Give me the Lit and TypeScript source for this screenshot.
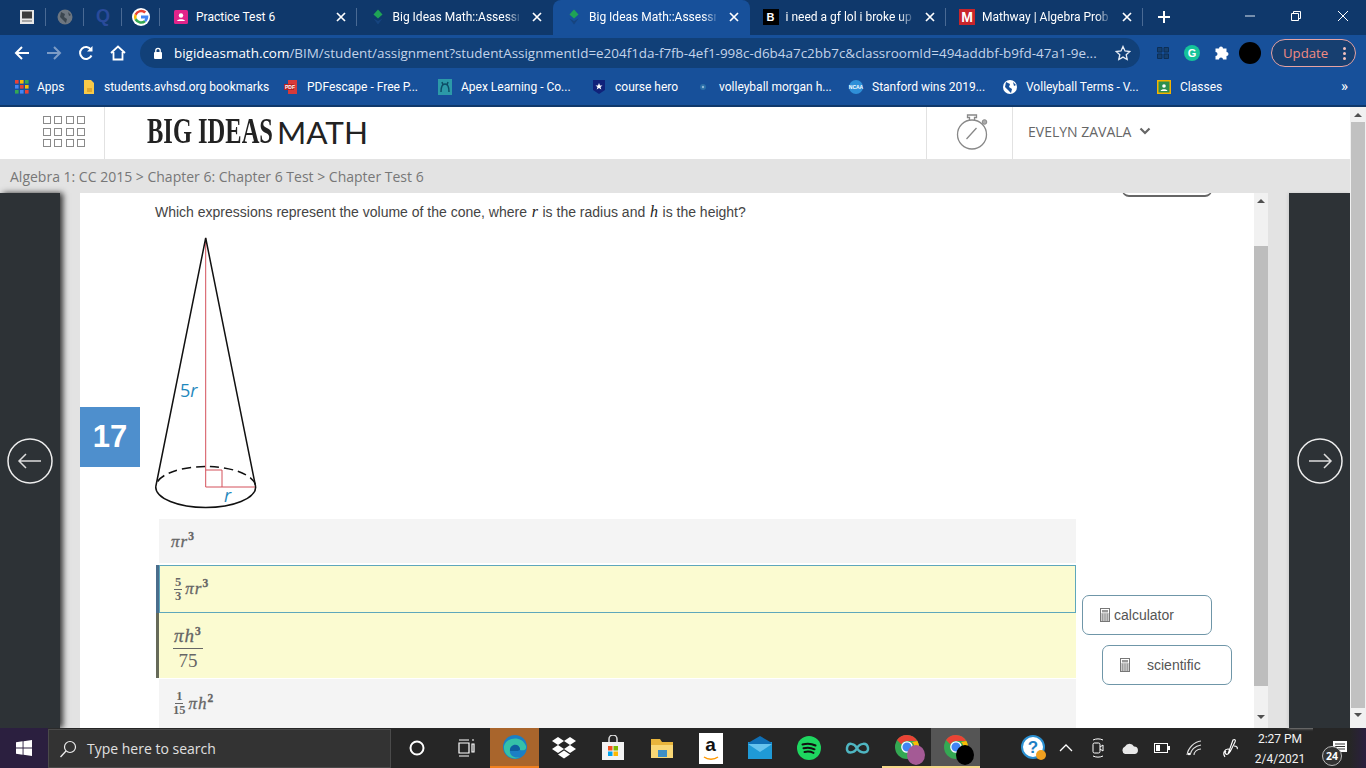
import { LitElement, html, svg, css } from "lit";
import { customElement } from "lit/decorators.js";

const calc = (w: number, h: number) => html`<svg class="calc" width="${w}" height="${h}" viewBox="0 0 10 14"><rect x=".5" y=".5" width="9" height="13" fill="#fff" stroke="#777"/><rect x="2" y="2" width="6" height="2.4" fill="#999"/><path d="M.5 6h9M.5 8h9M.5 10h9M.5 12h9M2.7 5.5v8M5 5.5v8M7.3 5.5v8" stroke="#777" stroke-width=".7" fill="none"/></svg>`;
const bim = html`<svg width="16" height="16" viewBox="0 0 16 16"><path d="M8 0.500l4.500 5L8 9.500 3.500 5.500z" fill="#1fa356"/><path d="M3.500 9.500L8 15.500l4.500-6L8 12z" fill="#16447f"/></svg>`;
const x = html`<svg class="x" width="10" height="10" viewBox="0 0 10 10"><path d="M1 1l8 8M9 1l-8 8" stroke="#fff" stroke-width="1.7"/></svg>`;

const TABS = [
  { t: "Practice Test 6", i: html`<svg width="16" height="16" viewBox="0 0 16 16"><rect x="1" y="1" width="14" height="14" rx="1.5" fill="#e2248a"/><circle cx="8" cy="6.5" r="2.2" fill="#fff"/><path d="M4 12c.5-2.500 7.500-2.500 8 0z" fill="#fff"/></svg>`, a: false, f: false },
  { t: "Big Ideas Math::Assessme", i: bim, a: false, f: true },
  { t: "Big Ideas Math::Assessme", i: bim, a: true, f: true },
  { t: "i need a gf lol i broke up", i: html`<span class="fav-b">B</span>`, a: false, f: true },
  { t: "Mathway | Algebra Probl", i: html`<span class="fav-m">M</span>`, a: false, f: true },
];

const APPS = ["#e94235", "#fbbc04", "#34a853", "#4285f4", "#e94235", "#fbbc04", "#34a853", "#4285f4", "#e94235"];
const BOOKMARKS = [
  { w: 67, t: "Apps", i: html`<svg width="14" height="14" viewBox="0 0 14 14">${APPS.map((c, k) => svg`<rect x="${(k % 3) * 5}" y="${Math.floor(k / 3) * 5}" width="3.6" height="3.6" fill="${c}"></rect>`)}</svg>` },
  { w: 201, t: "students.avhsd.org bookmarks", i: html`<svg width="14" height="16" viewBox="0 0 14 16"><path d="M2 1h7l3 3v11H2z" fill="#f7c948"/><path d="M5 9h5v4H5z" fill="#e0a82e"/></svg>` },
  { w: 154, t: "PDFescape - Free P...", i: html`<svg width="16" height="16" viewBox="0 0 16 16"><path d="M5 1h9v14H5z" fill="#d63a3a"/><rect x="1" y="5" width="10" height="6" fill="#b52222"/><text x="2" y="10" font-size="5" font-weight="700" fill="#fff" font-family="Liberation Sans">PDF</text></svg>` },
  { w: 154, t: "Apex Learning - Co...", i: html`<svg width="16" height="16" viewBox="0 0 16 16"><rect x="1" y="0" width="14" height="16" fill="#2c9aa8"/><path d="M4 13c0-6 2-8 4-8s4 2 4 8M5 3l1 3M11 3l-1 3" stroke="#0d4d66" stroke-width="1.500" fill="none"/></svg>` },
  { w: 104, t: "course hero", i: html`<svg width="16" height="16" viewBox="0 0 16 16"><path d="M2 1h12v10l-6 4-6-4z" fill="#10227a"/><path d="M8 4l1 2.500h2.500L9.500 8l.8 2.500L8 9 5.700 10.500 6.500 8 4.500 6.500H7z" fill="#fff"/></svg>` },
  { w: 153, t: "volleyball morgan h...", i: html`<svg width="16" height="16" viewBox="0 0 16 16"><circle cx="8" cy="8" r="3" fill="#2a6fa8"/><circle cx="8" cy="8" r="1.200" fill="#8fb6d6"/></svg>` },
  { w: 154, t: "Stanford wins 2019...", i: html`<svg width="16" height="16" viewBox="0 0 16 16"><circle cx="8" cy="8" r="7" fill="#2f8fd8"/><text x="8" y="10" text-anchor="middle" font-size="5" font-weight="700" fill="#fff" font-family="Liberation Sans">NCAA</text></svg>` },
  { w: 154, t: "Volleyball Terms - V...", i: html`<svg width="16" height="16" viewBox="0 0 16 16"><circle cx="8" cy="8" r="7" fill="#fff"/><path d="M4 3l4 2-1 3 3 2-1 4-3-3-3-3zM11 3l3 3-2 1z" fill="#17509a"/></svg>` },
  { w: 70, t: "Classes", i: html`<svg width="16" height="16" viewBox="0 0 16 16"><rect x="1" y="1" width="14" height="14" fill="#f4b400"/><rect x="2.500" y="2.500" width="11" height="11" fill="#2f8f4e"/><circle cx="8" cy="7" r="1.800" fill="#fff"/><path d="M4.500 12c.5-2.500 6.500-2.500 7 0z" fill="#fff"/></svg>` },
];

const chrome = html`<svg width="26" height="26" viewBox="0 0 26 26"><circle cx="13" cy="13" r="12" fill="#34a853"/><path d="M13 1a12 12 0 0 1 10.400 6H13a6 6 0 0 0-5.500 3.500L3 6a12 12 0 0 1 10-5z" fill="#ea4335"/><path d="M23.400 7A12 12 0 0 1 14 25l5-8.500A6 6 0 0 0 18 8z" fill="#fbbc04"/><circle cx="13" cy="13" r="5.200" fill="#4285f4" stroke="#fff" stroke-width="1.300"/></svg>`;

const TASK = [
  { c: "", i: html`<svg width="18" height="18" viewBox="0 0 18 18"><circle cx="9" cy="9" r="6.500" fill="none" stroke="#fff" stroke-width="2"/></svg>` },
  { c: "", i: html`<svg width="18" height="18" viewBox="0 0 18 18"><path d="M2 1h10M2 17h10M2 4h10v10H2zM15 1h2M15 5h2v8h-2z" fill="none" stroke="#fff" stroke-width="1.200"/></svg>` },
  { c: "edge", i: html`<svg width="26" height="26" viewBox="0 0 26 26"><circle cx="13" cy="13" r="12" fill="#1b7fc4"/><path d="M2 12C4 3 20 1 24 12c1 4-3 5-6 4 1-5-9-7-10 0-1 5 4 9 11 7-8 4-18-1-17-11z" fill="#35c1a8"/><path d="M8 17c-1-7 9-9 10-2 0 2-3 2-5 2" fill="#0e5e9e"/></svg>` },
  { c: "", i: html`<svg width="26" height="24" viewBox="0 0 26 24"><path d="M7 1l6 4-6 4-6-4zM19 1l6 4-6 4-6-4zM7 9l6 4-6 4-6-4zM19 9l6 4-6 4-6-4zM7 18.500l6-4 6 4-6 4z" fill="#fff"/></svg>` },
  { c: "", i: html`<svg width="24" height="26" viewBox="0 0 24 26"><path d="M8 7V4a4 4 0 0 1 8 0v3" fill="none" stroke="#ddd" stroke-width="1.500"/><rect x="1" y="7" width="22" height="18" fill="#f3f3f3"/><rect x="7" y="11" width="4.500" height="4.500" fill="#f25022"/><rect x="12.500" y="11" width="4.500" height="4.500" fill="#7fba00"/><rect x="7" y="16.500" width="4.500" height="4.500" fill="#00a4ef"/><rect x="12.500" y="16.500" width="4.500" height="4.500" fill="#ffb900"/></svg>` },
  { c: "", i: html`<svg width="24" height="22" viewBox="0 0 24 22"><path d="M1 2h9l2 3h11v16H1z" fill="#e8b53c"/><path d="M1 8h22v13H1z" fill="#f9d876"/><rect x="8" y="13" width="9" height="7" fill="#3f8fc4"/></svg>` },
  { c: "", i: html`<span class="amazon">a<svg width="16" height="5" viewBox="0 0 16 5"><path d="M1 1c4 3 10 3 14 0" fill="none" stroke="#f90" stroke-width="1.500"/></svg></span>` },
  { c: "", i: html`<svg width="26" height="24" viewBox="0 0 26 24"><rect x="1" y="6" width="24" height="17" fill="#1f9ad6"/><path d="M1 7l12-7 12 7-12 8z" fill="#0f6fb5"/><path d="M1 8l12 8 12-8" fill="#66c3ee"/></svg>` },
  { c: "", i: html`<svg width="26" height="26" viewBox="0 0 26 26"><circle cx="13" cy="13" r="12" fill="#1ed760"/><path d="M6.500 9.500c4-1.200 9-1 13 1M7.500 13.300c3.500-1 7.500-.8 11 1M8.500 17c3-.8 6-.6 9 .9" stroke="#111" stroke-width="2" fill="none" stroke-linecap="round"/></svg>` },
  { c: "", i: html`<svg width="26" height="16" viewBox="0 0 26 16"><path d="M12 8C9 3 3 2 2 8s7 6 10 0c3-5 10-6 11 0s-8 6-11 0" fill="none" stroke="#4fb6c2" stroke-width="2.500"/></svg>` },
  { c: "under", i: html`<span class="stack">${chrome}<i class="badge-purple"></i></span>` },
  { c: "active", i: html`<span class="stack">${chrome}<i class="badge-black"></i></span>` },
];

@customElement("app-root")
export class AppRoot extends LitElement {
  static styles = css`
    :host { display: block; width: 1366px; height: 768px; overflow: hidden; font-family: "Open Sans", sans-serif; }
    svg { display: block; flex: none; }
    .tabs { height: 35px; background: #0f386b; display: flex; padding-left: 8px; color: #fff; font: 12px Roboto, sans-serif; }
    .pin { width: 38px; display: flex; align-items: center; justify-content: center; position: relative; padding-bottom: 2px; box-sizing: border-box; }
    .pin::after, .tab::after { content: ""; position: absolute; right: 0; top: 8px; height: 18px; width: 1px; background: #4a6a94; }
    .tab { width: 196.500px; display: flex; align-items: center; position: relative; padding: 0 11px 2px 13px; box-sizing: border-box; gap: 7px; }
    .tab.active { background: #17509a; border-radius: 8px 8px 0 0; }
    .tab.active::after, .tab.nosep::after { display: none; }
    .tab-title { flex: 1; min-width: 0; white-space: nowrap; }
    .tab-title.fade { -webkit-mask-image: linear-gradient(90deg, #000 90%, rgba(0,0,0,.2)); }
    .x { margin-left: 6px; }
    .fav-b { width: 16px; height: 16px; background: #000; color: #fff; font: 700 11px/16px "Liberation Sans"; text-align: center; flex: none; }
    .fav-m { width: 16px; height: 16px; background: #c9252b; color: #fff; font: 700 14px/16px "Liberation Sans"; text-align: center; flex: none; }
    .fav-q { color: #2a4b9b; font: 700 18px "Liberation Sans"; }
    .newtab { width: 42px; display: flex; align-items: center; justify-content: center; padding-bottom: 2px; box-sizing: border-box; }
    .win { margin-left: auto; display: flex; padding-bottom: 4px; }
    .win div { width: 46.500px; display: flex; align-items: center; justify-content: center; }

    .toolbar { height: 36px; background: #17509a; display: flex; align-items: center; padding-left: 6px; }
    .nav { width: 32px; display: flex; justify-content: center; }
    .omni { width: 1000px; margin-left: 6px; height: 30px; border-radius: 15px; background: #114078; display: flex; align-items: center; padding: 0 9px 0 12px; box-sizing: border-box; color: #c3d3ea; font-size: 13.450px; white-space: nowrap; }
    .omni b { font-weight: 400; color: #fff; }
    .url { margin-left: 10px; flex: 1; overflow: hidden; }
    .ext { width: 29px; display: flex; justify-content: center; }
    .ext.first { margin-left: 8px; }
    .update { margin-left: 7px; width: 85px; height: 28px; box-sizing: border-box; border: 1px solid #e6a3a3; border-radius: 14px; background: #173f70; color: #f28b82; font-size: 13.200px; display: flex; align-items: center; justify-content: space-between; padding: 0 9px 0 11px; }
    .dots { display: flex; flex-direction: column; gap: 2px; }
    .dots i { width: 3px; height: 3px; border-radius: 50%; background: #f5c2bd; }

    .bookmarks { height: 34px; padding-bottom: 3px; box-sizing: border-box; background: #17509a; display: flex; align-items: center; padding-left: 15px; color: #fff; font: 12px Roboto, sans-serif; }
    .bm { display: flex; align-items: center; gap: 8px; white-space: nowrap; flex: none; }
    .more { margin-left: auto; margin-right: 18px; font-size: 15px; line-height: 1; }

    .page { display: flex; height: 623px; }
    .main { width: 1350px; display: flex; flex-direction: column; }
    .outer-scroll { width: 16px; background: #f1f1f1; display: flex; flex-direction: column; align-items: center; border-top: 2px solid #0f386b; box-sizing: border-box; }
    .up { width: 0; height: 0; border: 4px solid transparent; border-top: 0; border-bottom: 4px solid #505050; margin-top: 6px; }
    .down { width: 0; height: 0; border: 4px solid transparent; border-bottom: 0; border-top: 4px solid #505050; margin-bottom: 6px; }
    .outer-scroll .thumb { width: 14px; height: 586px; margin-top: 5px; background: #c1c1c1; }
    .outer-scroll .down { margin-top: 5px; }

    header { height: 54px; border-top: 2px solid #0f386b; box-sizing: border-box; background: #fff; display: flex; align-items: stretch; }
    .grid-box { width: 105px; box-sizing: border-box; border-right: 1px solid #e2e2e2; padding: 9px 0 0 43px; }
    .grid { display: grid; grid-template-columns: repeat(4, 8px); grid-auto-rows: 8px; gap: 3.500px 3.300px; }
    .grid i { border: 1.500px solid #8a8a8a; box-sizing: border-box; }
    .logo { margin-left: 42px; display: flex; align-items: center; color: #222; white-space: nowrap; width: 779px; padding-bottom: 3px; box-sizing: border-box; }
    .big { font: 700 35px "Liberation Serif"; transform: scaleX(.7); transform-origin: 0 50%; width: 130px; }
    .math { font: 400 31.500px Lato; }
    .watch { width: 87px; border-left: 1px solid #e2e2e2; border-right: 1px solid #e2e2e2; box-sizing: border-box; display: flex; align-items: center; justify-content: center; }
    .user { margin-left: 15px; display: flex; align-items: center; gap: 8px; color: #666; font-size: 14px; padding-bottom: 4px; }
    .crumb { height: 34px; background: #e3e3e3; color: #777; font-size: 14px; line-height: 35px; padding-left: 10px; }

    .content { flex: 1; min-height: 0; display: flex; background: #e3e3e3; }
    .dark { background: #2d3236; display: flex; align-items: center; justify-content: center; }
    .dark.l { width: 60px; box-shadow: 3px 0 6px #333; }
    .dark.r { width: 61px; margin-left: 21px; box-shadow: -1px 0 3px #ccc; }
    .panel { margin-left: 20px; width: 1174px; background: #fff; position: relative; overflow: hidden; }
    .inner-scroll { width: 14px; background: #f1f1f1; display: flex; flex-direction: column; align-items: center; }
    .inner-scroll .thumb { width: 14px; height: 440px; background: #bdbdbd; margin-top: 43px; }
    .inner-scroll .down { margin-top: 29px; margin-bottom: 0; }

    .question { padding: 10px 0 0 75px; height: 20px; font: 14px/18px "Liberation Sans", sans-serif; color: #444; }
    .question i { font: italic 400 16px "Liberation Serif"; color: #222; margin: 0 .75px; }
    .cone { margin: 0 0 0 70px; }
    .cone text { font-family: "Open Sans"; font-size: 18px; fill: #1f88bd; }
    .opts { margin: 0 0 0 79px; width: 917px; color: #666; font: italic 17px "Liberation Serif", serif; }
    .opt { display: flex; align-items: center; padding-left: 12px; box-sizing: border-box; background: #f4f4f4; }
    .o1 { height: 44px; margin-bottom: 2px; padding-top: 2px; }
    .o2 { height: 48px; background: #fbfbd1; border: 1px solid #5ea7bb; box-shadow: -3px 0 0 #4a6d8c; padding-left: 14px; }
    .o3 { height: 65px; background: #fbfbd1; box-shadow: -3px 0 0 #666a58; padding: 5px 0 0 14px; margin-bottom: 1px; font-size: 19px; }
    .o4 { height: 49px; padding-left: 14px; }
    .frac { display: inline-flex; flex-direction: column; align-items: center; font-style: normal; font-weight: 700; font-size: 12.500px; line-height: 13px; margin-right: 3px; }
    .frac span:first-child { border-bottom: 1px solid #666; padding: 0 1px; }
    .frac.big-f { font-size: 19px; line-height: 22px; font-style: italic; font-weight: 400; }
    .frac.big-f span:first-child { padding: 0 1px 1px; }
    .frac.big-f span:last-child { font-style: normal; padding-top: 1px; }
    sup { font: normal 700 11.500px "Liberation Serif"; vertical-align: 7px; line-height: 0; }
    .math-t { -webkit-text-stroke: .3px #666; letter-spacing: 1px; }

    .num { position: absolute; left: 0; top: 214px; width: 60px; height: 60px; background: #4e8fcd; color: #fff; font: 700 31px/60px "Liberation Sans"; text-align: center; }
    .btn { position: absolute; width: 130px; height: 40px; box-sizing: border-box; border: 1px solid #6f96a8; border-radius: 7px; background: #fff; display: flex; align-items: center; font: 14px "Liberation Sans"; color: #555; }
    .b0 { left: 1042px; top: -36px; width: 90px; border-color: #666; border-bottom-width: 2px; }
    .b1 { left: 1002px; top: 402px; padding-left: 17px; gap: 4px; }
    .b2 { left: 1022px; top: 452px; padding-left: 17px; gap: 17px; }

    .taskbar { height: 40px; background: #262626; display: flex; align-items: center; color: #fff; }
    .start { width: 48px; height: 40px; background: #2b1f3f; display: flex; align-items: center; justify-content: center; }
    .search { width: 343px; height: 39px; margin-top: 1px; box-sizing: border-box; background: #333; border: 1px solid #4a4a4a; display: flex; align-items: center; padding-left: 10px; gap: 10px; font-size: 14px; color: #e0e0e0; }
    .t { width: 49px; height: 40px; display: flex; align-items: center; justify-content: center; box-sizing: border-box; position: relative; }
    .first { margin-left: 1px; }
    .t.edge { background: #a9652c; border-bottom: 2px solid #f08020; }
    .t.active { background: #555; border-bottom: 2px solid #f5d88a; }
    .t.under { border-bottom: 2px solid #f5d88a; }
    .stack { position: relative; display: block; width: 26px; height: 26px; }
    .stack i { position: absolute; right: -5px; bottom: -5px; width: 18px; height: 20px; border-radius: 50%; }
    .badge-purple { background: #a45a95; }
    .badge-black { background: #000; }
    .amazon { width: 24px; height: 31px; background: #fff; color: #111; font: 700 19px/23px "Liberation Sans"; text-align: center; display: flex; flex-direction: column; align-items: center; }
    .tray { width: 32px; height: 40px; display: flex; align-items: center; justify-content: center; flex: none; }
    .tray.help { margin-left: 38px; }
    .tray.pen { margin-left: 4px; }
    .clock { width: 66px; text-align: center; font: 12px/20px Roboto, sans-serif; padding-top: 2px; margin-left: 1px; color: #f2f2f2; flex: none; }
    .notif { flex: 1; height: 40px; display: flex; align-items: center; justify-content: center; position: relative; background: linear-gradient(90deg, #262626 70%, #2b1f3f); }
    .badge { position: absolute; left: 9px; top: 18px; width: 18px; height: 18px; border: 1px solid #bbb; border-radius: 50%; background: #333; font: 700 10.500px/18px "Open Sans"; text-align: center; }
  `;

  render() {
    return html`
      <div class="tabs">
        <div class="pin"><svg width="16" height="16" viewBox="0 0 16 16"><rect x="1" y="1" width="14" height="14" fill="#e8e8e8"/><rect x="3" y="2.500" width="10" height="7" fill="#3d3d3d"/><path d="M3 12h10" stroke="#666"/></svg></div>
        <div class="pin"><svg width="16" height="16" viewBox="0 0 16 16"><circle cx="8" cy="8" r="7.500" fill="#6d7680"/><path d="M4 3l4 2-1 3 3 2-1 4-3-3-3-3zM11 3l3 3-2 1z" fill="#3b4650"/></svg></div>
        <div class="pin"><span class="fav-q">Q</span></div>
        <div class="pin"><svg width="18" height="18" viewBox="0 0 18 18"><circle cx="9" cy="9" r="9" fill="#fff"/><path d="M9 4.200a4.800 4.800 0 0 1 3.300 1.300l1.900-1.900A7.500 7.500 0 0 0 2.500 6l2.200 1.700A4.800 4.800 0 0 1 9 4.200z" fill="#ea4335"/><path d="M2.500 6a7.500 7.500 0 0 0 0 6l2.200-1.700a4.800 4.800 0 0 1 0-2.600z" fill="#fbbc05"/><path d="M2.500 12a7.500 7.500 0 0 0 11.500 1.900l-2-1.600A4.800 4.800 0 0 1 4.700 10.300z" fill="#34a853"/><path d="M16.300 7.500H9v3h4.200a3.700 3.700 0 0 1-1.200 1.800l2 1.600c1.500-1.500 2.600-3.700 2.300-6.400z" fill="#4285f4"/></svg></div>
        ${TABS.map((t, i) => html`<div class="tab ${t.a ? "active" : ""} ${i === 1 ? "nosep" : ""}">${t.i}<span class="tab-title ${t.f ? "fade" : ""}">${t.t}</span>${x}</div>`)}
        <div class="newtab"><svg width="14" height="14" viewBox="0 0 14 14"><path d="M7 1v12M1 7h12" stroke="#fff" stroke-width="2"/></svg></div>
        <div class="win">
          <div><svg width="12" height="12" viewBox="0 0 12 12"><path d="M1 6h10" stroke="#dfe6f0"/></svg></div>
          <div><svg width="12" height="12" viewBox="0 0 12 12"><path d="M1.500 3.500h7v7h-7zM3.500 3.500v-2h7v7h-2" fill="none" stroke="#fff"/></svg></div>
          <div><svg width="12" height="12" viewBox="0 0 12 12"><path d="M1 1l10 10M11 1L1 11" stroke="#fff"/></svg></div>
        </div>
      </div>
      <div class="toolbar">
        <div class="nav"><svg width="16" height="16" viewBox="0 0 16 16"><path d="M15 8H2M8 2L2 8l6 6" fill="none" stroke="#fff" stroke-width="2"/></svg></div>
        <div class="nav"><svg width="16" height="16" viewBox="0 0 16 16"><path d="M1 8h13M8 2l6 6-6 6" fill="none" stroke="#7d9cc6" stroke-width="2"/></svg></div>
        <div class="nav"><svg width="16" height="16" viewBox="0 0 16 16"><path d="M13.500 10.500A6 6 0 1 1 13 4.500" fill="none" stroke="#fff" stroke-width="2"/><path d="M14.500 1v5.500H9z" fill="#fff"/></svg></div>
        <div class="nav"><svg width="16" height="16" viewBox="0 0 16 16"><path d="M1 8l7-6.500L15 8M3.500 7v7.500h9V7" fill="none" stroke="#fff" stroke-width="1.800"/></svg></div>
        <div class="omni">
          <svg width="12" height="12" viewBox="0 0 12 12"><rect x="2" y="5" width="8" height="7" rx="1" fill="#fff"/><path d="M3.800 5V3.500a2.200 2.200 0 0 1 4.400 0V5" fill="none" stroke="#fff" stroke-width="1.300"/></svg>
          <span class="url"><b>bigideasmath.com</b>/BIM/student/assignment?studentAssignmentId=e204f1da-f7fb-4ef1-998c-d6b4a7c2bb7c&classroomId=494addbf-b9fd-47a1-9e...</span>
          <svg width="16" height="16" viewBox="0 0 16 16"><path d="M8 1.500l2 4.500 4.800.5-3.600 3.200 1 4.800L8 12.100l-4.200 2.400 1-4.800L1.200 6.500 6 6z" fill="none" stroke="#e6ecf5" stroke-width="1.300"/></svg>
        </div>
        <div class="ext first"><svg width="12" height="12" viewBox="0 0 12 12"><path d="M.5.500h4.500v4.500H.5zM7 .5h4.500v4.500H7zM.5 7h4.500v4.500H.5zM7 7h4.500v4.500H7z" fill="#16406f" stroke="#0d2f56"/></svg></div>
        <div class="ext"><svg width="16" height="16" viewBox="0 0 16 16"><circle cx="8" cy="8" r="8" fill="#15c39a"/><text x="8" y="12" text-anchor="middle" font-size="11" font-weight="700" fill="#fff" font-family="Liberation Sans">G</text></svg></div>
        <div class="ext"><svg width="16" height="16" viewBox="0 0 16 16"><path d="M2 4h3.500a2 2 0 0 1 4 0H13v3.500a2 2 0 0 1 0 4V15H9.500a2 2 0 0 0-4 0H2v-3.500a2 2 0 0 0 0-4z" fill="#fff" transform="translate(.5 -.5)"/></svg></div>
        <div class="ext"><svg width="22" height="22" viewBox="0 0 22 22"><circle cx="11" cy="11" r="11" fill="#000"/></svg></div>
        <div class="update">Update<span class="dots"><i></i><i></i><i></i></span></div>
      </div>
      <div class="bookmarks">
        ${BOOKMARKS.map((b) => html`<div class="bm" style="width:${b.w}px">${b.i}<span>${b.t}</span></div>`)}
        <span class="more">»</span>
      </div>
      <div class="page">
        <div class="main">
          <header>
            <div class="grid-box"><div class="grid">${Array.from({ length: 12 }, () => html`<i></i>`)}</div></div>
            <div class="logo"><span class="big">BIG IDEAS</span><span class="math">MATH</span></div>
            <div class="watch"><svg width="36" height="38" viewBox="0 0 36 38"><circle cx="20" cy="20.500" r="14.500" fill="none" stroke="#888" stroke-width="1.300"/><path d="M17.500 6V3.500H15.500V1h9v2.500H22.500V6M14.500 25l10-11" fill="none" stroke="#888" stroke-width="1.300"/><circle cx="32.500" cy="8" r="2.300" fill="#aaa" stroke="#888"/></svg></div>
            <div class="user">EVELYN ZAVALA <svg width="12" height="8" viewBox="0 0 12 8"><path d="M1.500 1.500L6 6l4.500-4.500" fill="none" stroke="#666" stroke-width="2.200"/></svg></div>
          </header>
          <div class="crumb">Algebra 1: CC 2015 &gt; Chapter 6: Chapter 6 Test &gt; Chapter Test 6</div>
          <div class="content">
            <div class="dark l"><svg width="46" height="46" viewBox="0 0 46 46"><circle cx="23" cy="23" r="22" fill="none" stroke="#eee" stroke-width="1.500"/><path d="M34 23H12M19 16l-7 7 7 7" fill="none" stroke="#ddd" stroke-width="1.500"/></svg></div>
            <div class="panel">
              <div class="question">Which expressions represent the volume of the cone, where <i>r</i> is the radius and <i>h</i> is the height?</div>
              <svg class="cone" width="120" height="296" viewBox="70 0 120 296">
                <path d="M125.700 15V264H175.700M125.700 247H142V264" fill="none" stroke="#d4505a" stroke-width="1"/>
                <path d="M75.700 264L125.700 15L175.700 264" fill="none" stroke="#111" stroke-width="1.500"/>
                <path d="M75.700 264A50 20.500 0 0 0 175.700 264" fill="none" stroke="#111" stroke-width="1.500"/>
                <path d="M75.700 264A50 20.500 0 0 1 175.700 264" fill="none" stroke="#111" stroke-width="1.500" stroke-dasharray="0 6 9 5 9 5 9 5 9 5 9 5 9 5 9 5 9 5 9 20"/>
                <text x="100" y="174">5<tspan font-style="italic">r</tspan></text>
                <text x="144" y="279" font-style="italic">r</text>
              </svg>
              <div class="opts">
                <div class="opt o1"><span class="math-t">πr<sup>3</sup></span></div>
                <div class="opt o2"><span class="frac"><span>5</span><span>3</span></span><span class="math-t">πr<sup>3</sup></span></div>
                <div class="opt o3"><span class="frac big-f"><span class="math-t">πh<sup>3</sup></span><span>75</span></span></div>
                <div class="opt o4"><span class="frac"><span>1</span><span>15</span></span><span class="math-t">πh<sup>2</sup></span></div>
              </div>
              <div class="num">17</div>
              <div class="btn b0"></div>
              <div class="btn b1">${calc(10, 14)} calculator</div>
              <div class="btn b2">${calc(10, 14)} scientific</div>
            </div>
            <div class="inner-scroll"><i class="up"></i><div class="thumb"></div><i class="down"></i></div>
            <div class="dark r"><svg width="46" height="46" viewBox="0 0 46 46"><circle cx="23" cy="23" r="22" fill="none" stroke="#eee" stroke-width="1.500"/><path d="M12 23h22M27 16l7 7-7 7" fill="none" stroke="#ddd" stroke-width="1.500"/></svg></div>
          </div>
        </div>
        <div class="outer-scroll"><i class="up"></i><div class="thumb"></div><i class="down"></i></div>
      </div>
      <div class="taskbar">
        <div class="start"><svg width="16" height="16" viewBox="0 0 16 16"><path d="M0 2.300l6.600-1v6.200H0zM7.500 1.200L16 0v7.500H7.500zM0 8.500h6.600v6.200l-6.600-1zM7.500 8.500H16V16l-8.500-1.200z" fill="#fff"/></svg></div>
        <div class="search">
          <svg width="18" height="18" viewBox="0 0 18 18"><circle cx="11" cy="7" r="5.500" fill="none" stroke="#eee" stroke-width="1.200"/><path d="M7 11l-5.500 6" stroke="#eee" stroke-width="1.300"/></svg>
          Type here to search
        </div>
        ${TASK.map((t, i) => html`<div class="t ${t.c} ${i === 0 ? "first" : ""}">${t.i}</div>`)}
        <div class="tray help"><svg width="26" height="26" viewBox="0 0 26 26"><circle cx="12" cy="12" r="11" fill="#fff" stroke="#2a8fd0" stroke-width="2"/><text x="12" y="18" text-anchor="middle" font-size="17" font-weight="700" fill="#1f7fc4" font-family="Liberation Sans">?</text><circle cx="20" cy="20" r="5" fill="#f0a020"/></svg></div>
        <div class="tray"><svg width="14" height="8" viewBox="0 0 14 8"><path d="M1 7l6-6 6 6" fill="none" stroke="#fff" stroke-width="1.300"/></svg></div>
        <div class="tray"><svg width="14" height="20" viewBox="0 0 14 20"><rect x="2" y="5" width="7" height="10" rx="1.500" fill="none" stroke="#fff"/><path d="M9 9l3-2v6l-3-2M2 2c3-1.500 7-1.500 10 0M2 18c3 1.500 7 1.500 10 0" fill="none" stroke="#fff"/></svg></div>
        <div class="tray"><svg width="18" height="12" viewBox="0 0 18 12"><path d="M4 12a4 4 0 0 1 0-7.500 5 5 0 0 1 9 0A3.800 3.800 0 0 1 14 12z" fill="#e8e8e8"/></svg></div>
        <div class="tray"><svg width="16" height="10" viewBox="0 0 16 10"><rect x=".5" y=".5" width="13" height="9" fill="none" stroke="#fff"/><rect x="2" y="2" width="4" height="6" fill="#fff"/><rect x="14" y="3" width="2" height="4" fill="#fff"/></svg></div>
        <div class="tray"><svg width="16" height="16" viewBox="0 0 16 16"><path d="M1 15C2 8 8 2 15 1M4 15c1-5 5-9 11-10M8 15c0-3 3-6 7-6" fill="none" stroke="#ddd" stroke-width="1.100"/><circle cx="3" cy="14" r="1.200" fill="#fff"/></svg></div>
        <div class="tray pen"><svg width="18" height="20" viewBox="0 0 18 20"><path d="M4 19c-3-4 0-8 3-8s2 4 0 5-4-1-2-3M7 16L12 2c2-1 3 0 2 2L9 14M13 8c3 0 4 2 3 3" fill="none" stroke="#fff" stroke-width="1.100"/></svg></div>
        <div class="clock">2:27 PM<br />2/4/2021</div>
        <div class="notif"><svg width="16" height="16" viewBox="0 0 16 16"><path d="M1 1h14v11H8l-3 3v-3H1z" fill="#fff"/><path d="M3 4h10M3 6.500h10M3 9h10" stroke="#333"/></svg><span class="badge">24</span></div>
      </div>
    `;
  }
}
